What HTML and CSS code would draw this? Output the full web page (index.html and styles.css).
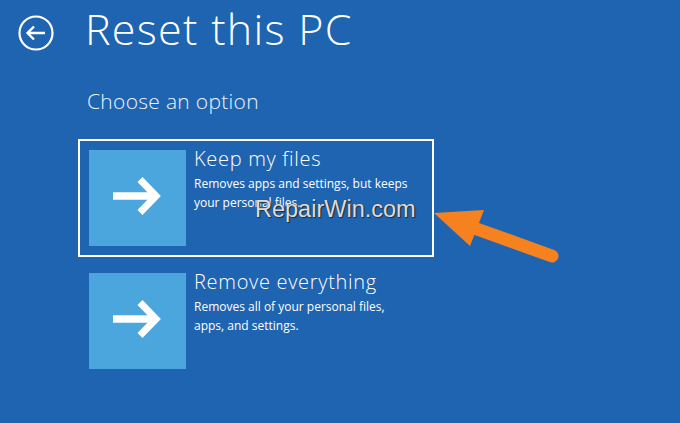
FILE: index.html
```html
<!DOCTYPE html>
<html>
<head>
<meta charset="utf-8">
<link rel="stylesheet" href="styles.css">
</head>
<body>
<div class="page">
  <div class="header">
    <svg class="back" width="38" height="38" viewBox="0 0 38 38">
      <circle cx="19" cy="19" r="16.5" fill="none" stroke="#fff" stroke-width="2.2"/>
      <path d="M28 19H11M17 12.5L10.5 19L17 25.5" fill="none" stroke="#fff" stroke-width="2.4"/>
    </svg>
    <h1 class="title">Reset this PC</h1>
  </div>
  <h2 class="subtitle">Choose an option</h2>
  <div class="options">
    <div class="option selected">
      <div class="tile">
        <svg width="97" height="96" viewBox="0 0 97 96">
          <path d="M24 46H67" stroke="#fff" stroke-width="7.5" fill="none"/>
          <polyline points="51,29.5 67,46 51,62.5" stroke="#fff" stroke-width="7" fill="none" stroke-miterlimit="10"/>
        </svg>
      </div>
      <div class="text">
        <div class="name">Keep my files</div>
        <div class="desc">Removes apps and settings, but keeps<br>your personal files.</div>
      </div>
    </div>
    <div class="option">
      <div class="tile">
        <svg width="97" height="96" viewBox="0 0 97 96">
          <path d="M24 46H67" stroke="#fff" stroke-width="7.5" fill="none"/>
          <polyline points="51,29.5 67,46 51,62.5" stroke="#fff" stroke-width="7" fill="none" stroke-miterlimit="10"/>
        </svg>
      </div>
      <div class="text">
        <div class="name">Remove everything</div>
        <div class="desc">Removes all of your personal files,<br>apps, and settings.</div>
      </div>
    </div>
  </div>
</div>
<div class="watermark">RepairWin.com</div>
<svg class="pointer" width="680" height="423" viewBox="0 0 680 423">
  <line x1="474" y1="228" x2="552" y2="256" stroke="#f5821f" stroke-width="13" stroke-linecap="round"/>
  <polygon points="434,213 484,210 470,246" fill="#f5821f"/>
</svg>
</body>
</html>
```

FILE: styles.css
```css
html, body {
  margin: 0;
  padding: 0;
}
body {
  background: #1f64b0;
  width: 680px;
  height: 423px;
  overflow: hidden;
  position: relative;
  font-family: "Open Sans", "Segoe UI", sans-serif;
  color: #fff;
}
.page {
  padding: 8px 0 0 17px;
}
.header {
  display: flex;
  align-items: flex-start;
}
.back {
  display: block;
  margin-top: 6px;
}
.title {
  margin: 0 0 0 30px;
  font-size: 43px;
  line-height: 42px;
  font-weight: 300;
  letter-spacing: 1.3px;
}
.subtitle {
  margin: 36px 0 0 70px;
  font-size: 21px;
  line-height: 26px;
  font-weight: 300;
  letter-spacing: 0.3px;
  color: #eef3fa;
}
.options {
  margin: 25px 0 0 61px;
  display: flex;
  flex-direction: column;
  gap: 5px;
}
.option {
  width: 334px;
  box-sizing: content-box;
  border: 2px solid transparent;
  padding: 9px;
  display: flex;
  gap: 8px;
}
.option.selected {
  border-color: #fff;
}
.tile {
  width: 97px;
  height: 96px;
  background: #4ba6dd;
  flex: none;
}
.tile svg {
  display: block;
}
.text {
  margin-top: -2px;
}
.name {
  font-size: 20px;
  line-height: 22px;
  font-weight: 300;
  letter-spacing: 0.7px;
}
.desc {
  margin-top: 4px;
  font-size: 12px;
  line-height: 19px;
  font-weight: 400;
  white-space: nowrap;
}
.watermark {
  position: absolute;
  left: 255px;
  top: 196px;
  font-family: "Liberation Sans", Arial, sans-serif;
  font-size: 23.5px;
  color: #dcdcdc;
  text-shadow: 1px 1px 1px #2a2a2a, 0 0 1px #333;
}
.pointer {
  position: absolute;
  left: 0;
  top: 0;
  pointer-events: none;
}
```
